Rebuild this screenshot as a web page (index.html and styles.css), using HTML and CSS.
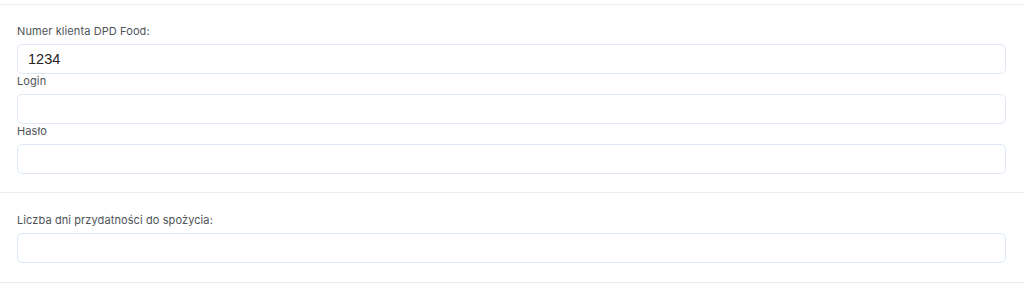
FILE: index.html
```html
<!DOCTYPE html>
<html lang="pl">
<head>
    <meta charset="UTF-8">
    <meta name="viewport" content="width=device-width, initial-scale=1.0">
    <title>DPD Food</title>
    <link rel="stylesheet" href="styles.css">
</head>
<body>
    <div class="settings">
        <div class="section">
            <label class="field-label" for="clientNumber">Numer klienta DPD Food:</label>
            <input type="text" id="clientNumber" class="field-input" value="1234">
            <label class="field-label" for="login">Login</label>
            <input type="text" id="login" class="field-input">
            <label class="field-label" for="password">Hasło</label>
            <input type="password" id="password" class="field-input">
        </div>
        <div class="section section-last">
            <label class="field-label" for="days">Liczba dni przydatności do spożycia:</label>
            <input type="text" id="days" class="field-input">
        </div>
    </div>
</body>
</html>
```

FILE: styles.css
```css
body {
    margin: 0;
    padding: 4px 0 0;
    background-color: #ffffff;
    font-family: Inter, "Noto Sans", Arial, sans-serif;
}
.settings {
    display: flex;
    flex-direction: column;
}
.section {
    display: flex;
    flex-direction: column;
    border-top: 1px solid #e8ecf1;
    padding: 18px 18px 19px 17px;
}
.section-last {
    padding-top: 19px;
    padding-bottom: 20px;
    border-bottom: 1px solid #e8ecf1;
}
.field-label {
    display: block;
    font-size: 11px;
    line-height: 16px;
    letter-spacing: 0.1px;
    color: #4e5358;
    margin-bottom: 5px;
}
.field-input {
    box-sizing: border-box;
    height: 30px;
    width: 100%;
    margin: 0 0 -1px;
    padding: 0 10px;
    border: 1px solid #dfe8f7;
    border-radius: 5px;
    font-family: "Liberation Sans", Arial, sans-serif;
    font-size: 14.5px;
    color: #222222;
    background: #ffffff;
    outline: none;
}
```
